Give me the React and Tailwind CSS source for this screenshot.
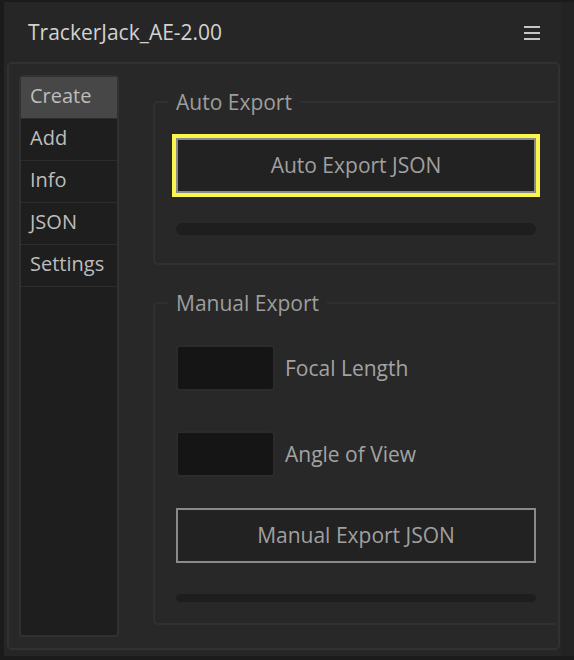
import React from "react";

const font = { fontFamily: '"Open Sans", "Noto Sans", sans-serif' };

function Field({ label }) {
  return (
    <div className="flex items-center">
      <div className="w-[99px] h-[46px] rounded-[4px] border-2 border-[#2b2b2b] bg-[#151515]" />
      <span className="ml-[10px] text-[21px] leading-[28px] text-[#a3a3a3]">{label}</span>
    </div>
  );
}

export default function App() {
  const tabs = ["Create", "Add", "Info", "JSON", "Settings"];
  return (
    <div className="w-[574px] h-[660px] bg-[#1b1b1b] flex overflow-hidden" style={font}>
      <div className="ml-[4px] mt-[2px] w-[557px] h-[654px] bg-[#262626] flex flex-col">
        <div className="flex items-center justify-between pt-[16px] pl-[24px] pr-[21px] h-[44px]">
          <span className="text-[21px] leading-[28px] text-[#d2d2d2]">TrackerJack_AE-2.00</span>
          <div className="flex flex-col gap-[4px] mt-[2px]">
            <div className="w-[16px] h-[2px] bg-[#c6c6c6]" />
            <div className="w-[16px] h-[2px] bg-[#c6c6c6]" />
            <div className="w-[16px] h-[2px] bg-[#c6c6c6]" />
          </div>
        </div>
        <div className="mt-[16px] ml-[3px] w-[553px] h-[588px] rounded-[5px] border-2 border-[#313131] bg-[#282828] flex pl-[10px] pt-[11px] pb-[11px]">
          <div className="w-[100px] h-full rounded-[4px] border-2 border-[#313131] bg-[#1e1e1e] flex flex-col">
            {tabs.map((t, i) => (
              <div
                key={t}
                className={
                  "h-[42px] border-b border-[#2c2c2c] pl-[9px] text-[20px] leading-[38px] text-[#bdbdbd] " +
                  (i === 0 ? "bg-[#474747]" : "")
                }
              >
                {t}
              </div>
            ))}
          </div>
          <div className="ml-[34px] flex flex-col">
            <fieldset className="mt-[13px] w-[403px] rounded-l-[5px] border-2 border-r-0 border-[#303030] pl-[21px] pr-[20px] pt-[22px] pb-[28px] m-0">
              <legend className="-ml-[8px] px-[8px] text-[21px] leading-[28px] text-[#9e9e9e]">Auto Export</legend>
              <button className="w-[360px] h-[55px] border-2 border-[#8a8a8a] bg-[#222222] outline-[4px] outline-solid outline-[#fbf64e] text-[21px] text-[#a0a0a0]">
                Auto Export JSON
              </button>
              <div className="mt-[30px] w-[360px] h-[12px] rounded-full bg-[#1e1e1e]" />
            </fieldset>
            <fieldset className="mt-[24px] w-[403px] rounded-l-[5px] border-2 border-r-0 border-[#303030] pl-[21px] pr-[20px] pt-[28px] pb-[21px] m-0">
              <legend className="-ml-[8px] px-[8px] text-[21px] leading-[28px] text-[#9e9e9e]">Manual Export</legend>
              <div className="flex flex-col gap-[40px]">
                <Field label="Focal Length" />
                <Field label="Angle of View" />
              </div>
              <button className="mt-[31px] w-[360px] h-[55px] border-2 border-[#8a8a8a] bg-[#222222] text-[21px] text-[#a0a0a0]">
                Manual Export JSON
              </button>
              <div className="mt-[31px] w-[360px] h-[8px] rounded-full bg-[#1e1e1e]" />
            </fieldset>
          </div>
        </div>
      </div>
      <div className="mt-[2px] w-[13px] h-[654px] bg-[#232323]" />
    </div>
  );
}
